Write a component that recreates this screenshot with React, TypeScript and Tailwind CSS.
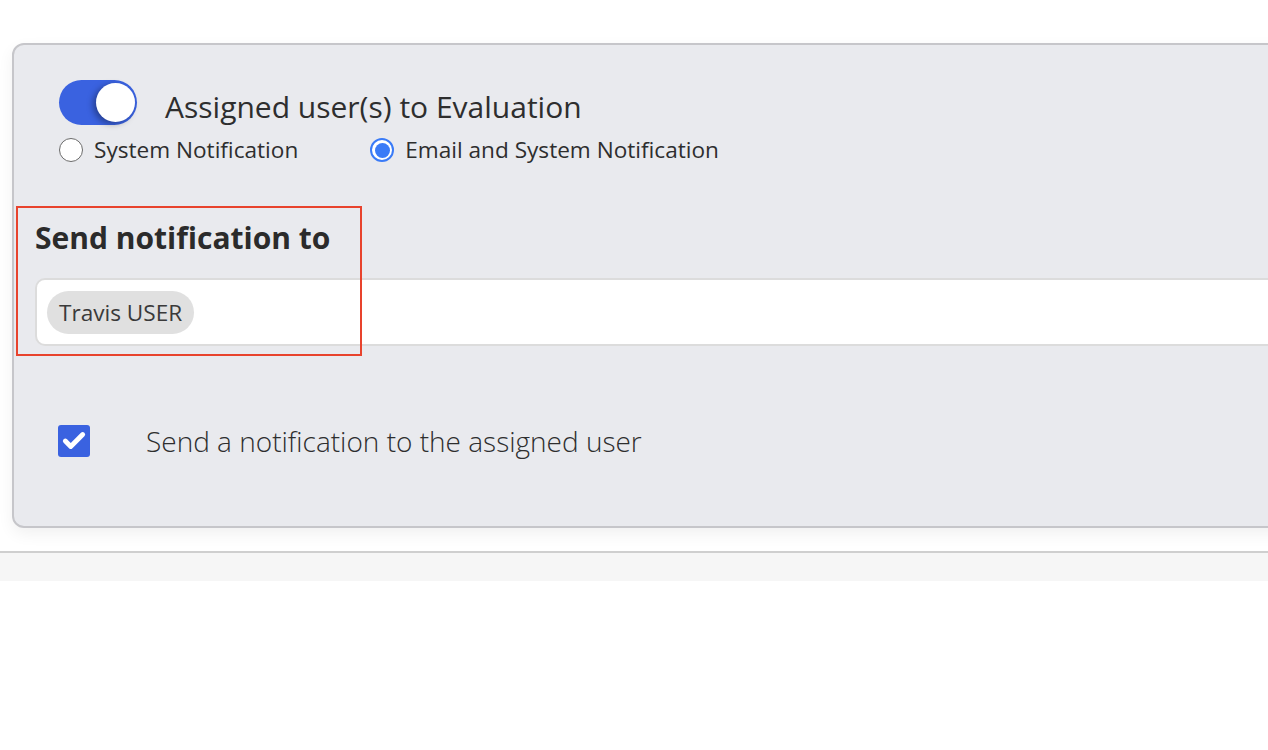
import { Check } from 'lucide-react';

function Toggle() {
  return (
    <div className="relative h-[45px] w-[78px] shrink-0 rounded-full bg-[#3a62e0]">
      <div className="absolute right-[2px] top-[3px] h-[39px] w-[39px] rounded-full bg-white shadow-[-3px_2px_6px_rgba(0,0,0,0.35)]" />
    </div>
  );
}

function Radio({ checked, label }: { checked?: boolean; label: string }) {
  return (
    <label className="flex items-center gap-[11px]">
      {checked ? (
        <span className="flex h-[24px] w-[24px] items-center justify-center rounded-full border-2 border-[#3a7bf7] bg-white">
          <span className="h-[15px] w-[15px] rounded-full bg-[#3a7bf7]" />
        </span>
      ) : (
        <span className="h-[24px] w-[24px] rounded-full border-[1.5px] border-[#6b6b6b] bg-white" />
      )}
      <span className="text-[22.6px] leading-[30px] text-[#2e2e2e]">{label}</span>
    </label>
  );
}

export default function App() {
  return (
    <div className="h-[750px] w-[1268px] overflow-hidden bg-white font-['Open_Sans',sans-serif]">
      <div className="pl-[12px] pt-[43px]">
        <div className="w-[1320px] rounded-[12px] border-2 border-[#c6c6ca] bg-[#e9eaee] pb-[65px] pt-[35px] shadow-[0_6px_16px_rgba(0,0,0,0.06)]">
          <div className="pl-[45px]">
            <div className="flex items-start gap-[28px]">
              <Toggle />
              <span className="mt-[7px] text-[30px] leading-[40px] text-[#2e2e2e]">Assigned user(s) to Evaluation</span>
            </div>
            <div className="mt-[8px] flex gap-[72px]">
              <Radio label="System Notification" />
              <Radio checked label="Email and System Notification" />
            </div>
          </div>

          <div className="relative mt-[53px] pl-[21px]">
            <div className="absolute left-[2px] top-[-12px] h-[150px] w-[346px] border-2 border-[#e8432d]" />
            <h2 className="text-[30px] font-bold leading-[40px] text-[#2b2b2b]">Send notification to</h2>
            <div className="mt-[20px] flex h-[68px] items-center rounded-[10px] border-2 border-[#dcdcdc] bg-white pl-[10px]">
              <span className="rounded-full bg-[#e0e0e0] px-[12px] py-[6px] text-[22.6px] leading-[31px] text-[#3a3a3a]">
                Travis USER
              </span>
            </div>
          </div>

          <div className="mt-[75px] flex items-center gap-[56px] pl-[44px]">
            <span className="flex h-[32px] w-[32px] items-center justify-center rounded-[3px] bg-[#3a62e0]">
              <Check className="h-[26px] w-[26px] text-white" strokeWidth={4.5} />
            </span>
            <span className="text-[28px] font-light leading-[40px] text-[#2e2e2e]">Send a notification to the assigned user</span>
          </div>
        </div>
      </div>
      <div className="mt-[23px] h-[30px] border-t-2 border-[#cfcfcf] bg-[#f6f6f6]" />
    </div>
  );
}
